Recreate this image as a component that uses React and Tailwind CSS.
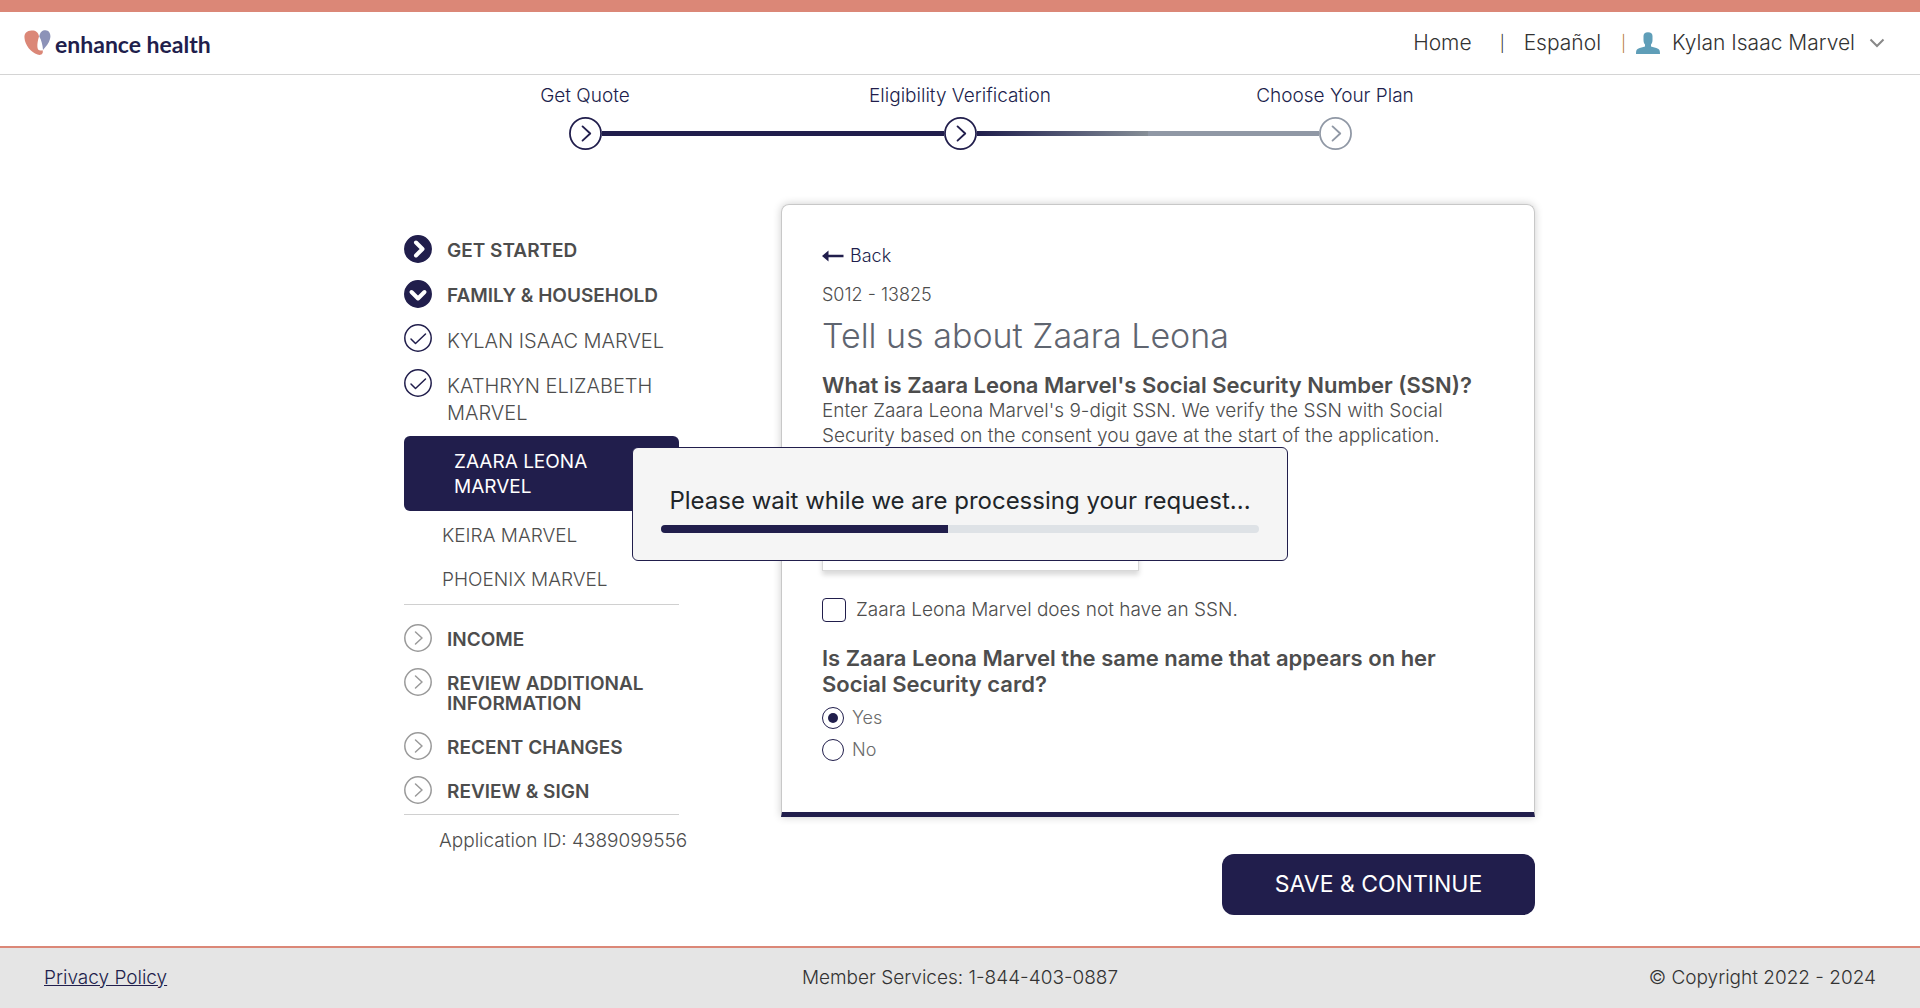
const NAVY = "#211e4c";

function Logo() {
  return (
    <a href="#home" className="flex items-center gap-1 text-[#211e4c]">
      <svg width="27" height="26" viewBox="0 0 27 26" aria-hidden="true">
        <path
          d="M0.5 8C0 3 3 .7 7.500 .5C11.500 .3 14.300 2 15 6.500C13.800 10 13.200 14 13.400 17C13.600 20 15.500 21.300 18.600 20.200C19.600 23.500 17.500 25.700 13.500 24.600C7 22.500 1 15 .5 8Z"
          fill="#db8777"
        />
        <path
          d="M15.300 6.500C16 2 18.500 .2 21.500 .3C25.500 .6 27.300 4.500 26 9C25 13 22 16.500 19 20C18.600 15 17.600 10.500 15.300 6.500Z"
          fill="#8c92b8"
        />
      </svg>
      <span className="pt-0.5 font-[Lato] text-[23px] leading-7 font-bold">enhance health</span>
    </a>
  );
}

function Chevron({ size, color, fill = "none", stroke = 1.5, mark = color, d = "M12 8.500L18 14.500L12 20.500" }) {
  return (
    <svg width={size} height={size} viewBox="0 0 28 28" fill="none" className="shrink-0" aria-hidden="true">
      <circle cx="14" cy="14" r="13.200" fill={fill} stroke={color} strokeWidth="1.500" />
      <path d={d} stroke={mark} strokeWidth={stroke} strokeLinecap="round" strokeLinejoin="round" />
    </svg>
  );
}

const RightSolid = () => <Chevron size={28} color={NAVY} fill={NAVY} mark="#fff" stroke={4} d="M12 7.500L18.500 14L12 20.500" />;
const DownSolid = () => <Chevron size={28} color={NAVY} fill={NAVY} mark="#fff" stroke={4} d="M7.500 12L14 18.500L20.500 12" />;
const Check = () => <Chevron size={28} color={NAVY} d="M7 15L11.500 19.500L21.500 10" />;
const RightGray = () => <Chevron size={28} color="#9a9a9a" d="M11.500 8L18 14L11.500 20" />;

const STEPS = [
  { label: "Get Quote", color: NAVY, left: "bg-transparent", right: "bg-[#211e4c]" },
  { label: "Eligibility Verification", color: NAVY, left: "bg-[#211e4c]", right: "bg-linear-to-r from-[#211e4c] to-[#868e96]" },
  { label: "Choose Your Plan", color: "#9098a5", left: "bg-[#9098a5]", right: "bg-transparent" },
];

function Stepper() {
  return (
    <ol className="mx-auto grid w-full max-w-[1125px] grid-cols-3 pt-2.5">
      {STEPS.map((s) => (
        <li key={s.label} className="text-center">
          <span className="block text-[19px] leading-[22px] font-light text-[#211e4c]">{s.label}</span>
          <span className="mt-2.5 flex items-center">
            <span className={"h-[5px] flex-1 " + s.left} />
            <Chevron size={33} color={s.color} stroke={1.6} d="M11.500 8L18 14L11.500 20" />
            <span className={"h-[5px] flex-1 " + s.right} />
          </span>
        </li>
      ))}
    </ol>
  );
}

function Section({ icon, children, className = "" }) {
  return (
    <li className={"flex items-start gap-[15px] " + className}>
      {icon}
      <a href="#section" className="pt-1.5 text-[19px] leading-5 font-semibold text-[#4d4d4d]">
        {children}
      </a>
    </li>
  );
}

function Member({ children, className = "" }) {
  return (
    <li className={"flex items-start gap-[15px] " + className}>
      <Check />
      <a href="#member" className="pt-1 text-[20px] leading-[27px] font-light text-[#4d4d4d]">
        {children}
      </a>
    </li>
  );
}

function Sidebar() {
  return (
    <nav aria-label="Application sections" className="w-[275px] shrink-0 pt-[31px]">
      <ul className="border-b border-[#d0d0d0] pb-3.5">
        <Section icon={<RightSolid />}>GET STARTED</Section>
        <Section icon={<DownSolid />} className="mt-[17px]">FAMILY &amp; HOUSEHOLD</Section>
        <Member className="mt-4">KYLAN ISAAC MARVEL</Member>
        <Member className="mt-3.5">KATHRYN ELIZABETH MARVEL</Member>
        <li className="mt-[9px] rounded-md bg-[#211e4c] pt-[13px] pr-16 pb-3 pl-[50px]">
          <a href="#member" aria-current="page" className="block text-[19px] leading-[25px] text-white">
            ZAARA LEONA MARVEL
          </a>
        </li>
        <li className="mt-[15px] pl-[38px] text-[19px] leading-5 font-light text-[#4d4d4d]">
          <a href="#member">KEIRA MARVEL</a>
        </li>
        <li className="mt-6 pl-[38px] text-[19px] leading-5 font-light text-[#4d4d4d]">
          <a href="#member">PHOENIX MARVEL</a>
        </li>
      </ul>
      <ul className="border-b border-[#d0d0d0] pt-[19px] pb-2.5">
        <Section icon={<RightGray />}>INCOME</Section>
        <Section icon={<RightGray />} className="mt-4">REVIEW ADDITIONAL INFORMATION</Section>
        <Section icon={<RightGray />} className="mt-[18px]">RECENT CHANGES</Section>
        <Section icon={<RightGray />} className="mt-4">REVIEW &amp; SIGN</Section>
      </ul>
      <p className="mt-4 pl-[35px] text-[19px] leading-5 font-light whitespace-nowrap text-[#4d4d4d]">
        Application ID: 4389099556
      </p>
    </nav>
  );
}

function Radio({ label, ...rest }) {
  return (
    <label className="flex items-center gap-2 text-[18px] leading-[22px] font-light text-[#6b6b6b]">
      <input
        type="radio"
        name="same-name"
        className="grid size-[22px] appearance-none place-items-center rounded-full border border-[#211e4c] before:size-2.5 before:rounded-full checked:before:bg-[#211e4c]"
        {...rest}
      />
      {label}
    </label>
  );
}

function FormCard() {
  return (
    <form className="w-full max-w-[754px]" onSubmit={(e) => e.preventDefault()}>
      <div className="rounded-t-lg border border-b-[5px] border-[#c8c8c8] border-b-[#211e4c] px-10 pt-[41px] pb-[51px] text-[#4d4d4d] shadow-[0_0_8px_rgba(0,0,0,0.2)]">
        <a href="#back" className="flex items-center gap-1.5 text-[18px] leading-5 font-light text-[#211e4c]">
          <svg width="22" height="12" viewBox="0 0 22 12" aria-hidden="true">
            <path d="M0 6L6.500 .5V4.800H21.500V7.200H6.500V11.500Z" fill={NAVY} />
          </svg>
          Back
        </a>
        <p className="mt-[19px] text-[18px] leading-5 font-light">S012 - 13825</p>
        <h1 className="mt-[11px] text-[34px] leading-10 font-light text-[#5f6570]">Tell us about Zaara Leona</h1>
        <h2 className="mt-4 text-[22px] leading-[26px] font-semibold">
          What is Zaara Leona Marvel's Social Security Number (SSN)?
        </h2>
        <p className="text-[19px] leading-[25px] font-light">
          Enter Zaara Leona Marvel's 9-digit SSN. We verify the SSN with Social Security based on the consent you gave at the start of the application.
        </p>
        <input
          type="text"
          aria-label="SSN"
          className="mt-[75px] block h-12 w-full max-w-[317px] border border-[#d8d8d8] px-3 shadow-[0_4px_5px_rgba(0,0,0,0.15)]"
        />
        <label className="mt-[27px] flex items-center gap-2.5 text-[19px] leading-6 font-light">
          <input type="checkbox" className="size-6 appearance-none rounded border border-[#211e4c] checked:bg-[#211e4c]" />
          Zaara Leona Marvel does not have an SSN.
        </label>
        <fieldset className="mt-[23px]">
          <legend className="text-[22px] leading-[26px] font-semibold">
            Is Zaara Leona Marvel the same name that appears on her Social Security card?
          </legend>
          <div className="mt-2.5 flex flex-col gap-2.5">
            <Radio label="Yes" defaultChecked />
            <Radio label="No" />
          </div>
        </fieldset>
      </div>
      <div className="mt-[37px] flex justify-end">
        <button type="submit" className="h-[61px] w-[313px] rounded-xl bg-[#211e4c] text-[23px] text-white">
          SAVE &amp; CONTINUE
        </button>
      </div>
    </form>
  );
}

function ProcessingDialog() {
  return (
    <div role="dialog" aria-label="Processing" className="fixed inset-0 flex items-center justify-center">
      <div className="w-full max-w-[656px] rounded-md border border-[#211e4c] bg-[#f5f5f5] px-7 pt-[37px] pb-[27px]">
        <p className="text-center text-[24px] leading-8 whitespace-nowrap text-[#212529]">
          Please wait while we are processing your request...
        </p>
        <div role="progressbar" aria-label="Processing request" aria-valuenow={48} className="mt-2 h-2 overflow-hidden rounded bg-[#dee2e6]">
          <div className="h-full w-[48%] bg-[#211e4c]" />
        </div>
      </div>
    </div>
  );
}

export default function App() {
  return (
    <div className="flex min-h-screen flex-col bg-white font-['Inter',sans-serif]">
      <header className="flex items-center justify-between border-t-[12px] border-b border-t-[#db8777] border-b-[#d4d4d4] py-4 pr-[35px] pl-6 text-[#333]">
        <Logo />
        <nav aria-label="Account" className="flex items-center text-[21px] leading-7 font-light">
          <a href="#home">Home</a>
          <span className="ml-7 text-[16px]">|</span>
          <a href="#es" className="ml-[19px]">Español</a>
          <span className="ml-5 text-[16px] text-[#b8783a]">|</span>
          <button type="button" className="ml-2.5 flex items-center">
            <svg width="24" height="22" viewBox="0 0 24 22" aria-hidden="true" className="mr-3">
              <path
                d="M7.500 4C7.500 1.500 9 .2 12 .2S16.500 1.500 16.500 4V8C16.500 10 15.800 11.500 15 12.500V14.500C17 15.300 20 15.800 22 16.700C23.700 17.500 24 19 24 22H0C0 19 .3 17.500 2 16.700C4 15.800 7 15.300 9 14.500V12.500C8.200 11.500 7.500 10 7.500 8Z"
                fill="#5f9eb8"
              />
            </svg>
            Kylan Isaac Marvel
            <svg width="16" height="10" viewBox="0 0 16 10" fill="none" aria-hidden="true" className="ml-3.5">
              <path d="M1.500 1.500L8 8L14.500 1.500" stroke="#888" strokeWidth="2" />
            </svg>
          </button>
        </nav>
      </header>
      <Stepper />
      <main className="mx-auto mt-[54px] flex w-full max-w-[1150px] flex-1 justify-between gap-8 pl-[19px]">
        <Sidebar />
        <FormCard />
      </main>
      <footer className="mt-[31px] grid grid-cols-3 border-t-2 border-[#db8777] bg-[#e5e5e5] px-11 py-[19px] text-[19px] leading-[22px] font-light text-[#333]">
        <a href="#privacy" className="justify-self-start text-[#211e4c] underline">Privacy Policy</a>
        <p className="text-center">Member Services: 1-844-403-0887</p>
        <p className="text-right">© Copyright 2022 - 2024</p>
      </footer>
      <ProcessingDialog />
    </div>
  );
}
